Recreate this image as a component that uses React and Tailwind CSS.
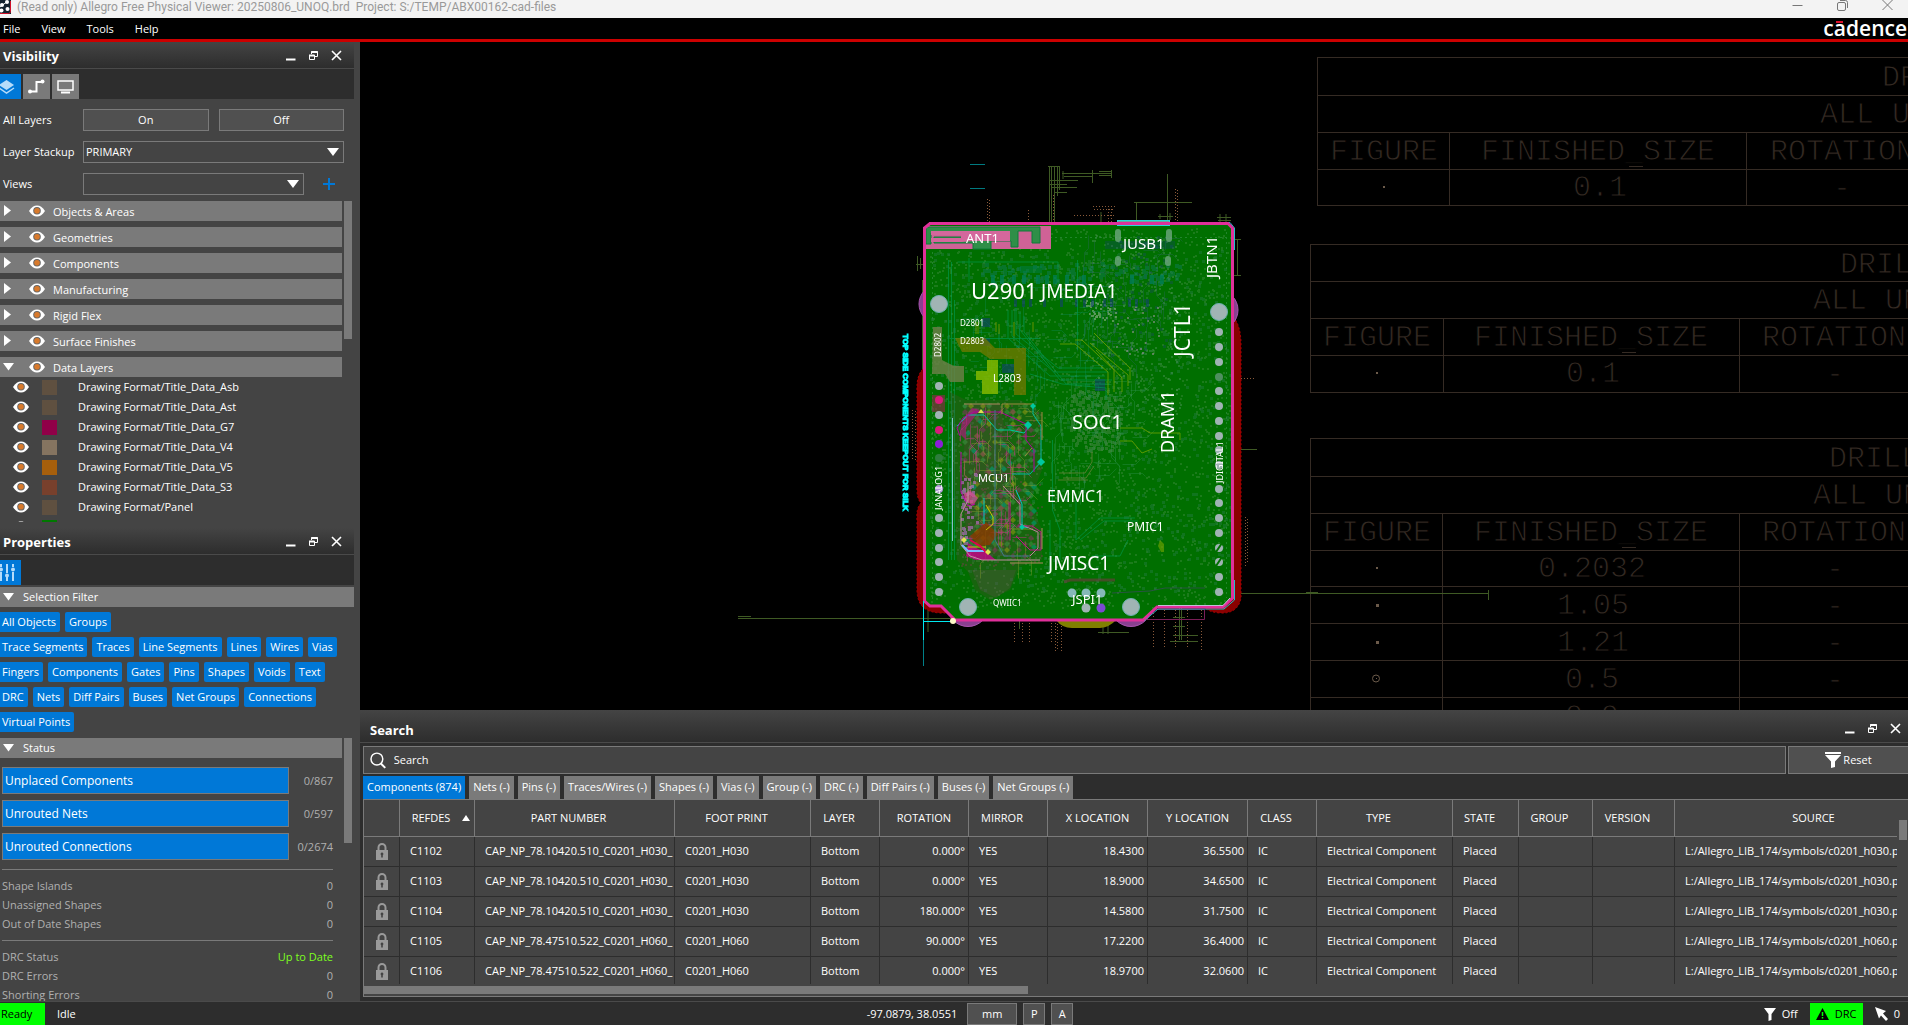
import React, { useState } from 'react';

const LAYER_GROUPS = ['Objects & Areas', 'Geometries', 'Components', 'Manufacturing', 'Rigid Flex', 'Surface Finishes', 'Data Layers'];

const DATA_LAYERS = [
  { name: 'Drawing Format/Title_Data_Asb', color: 'bg-[#5f5040]' },
  { name: 'Drawing Format/Title_Data_Ast', color: 'bg-[#5f5040]' },
  { name: 'Drawing Format/Title_Data_G7', color: 'bg-[#900048]' },
  { name: 'Drawing Format/Title_Data_V4', color: 'bg-[#857460]' },
  { name: 'Drawing Format/Title_Data_V5', color: 'bg-[#a65f0c]' },
  { name: 'Drawing Format/Title_Data_S3', color: 'bg-[#78402c]' },
  { name: 'Drawing Format/Panel', color: 'bg-[#5f5040]' },
  { name: '', color: 'bg-[#007800]' },
];

const FILTER_ROWS = [
  ['All Objects', 'Groups'],
  ['Trace Segments', 'Traces', 'Line Segments', 'Lines', 'Wires', 'Vias'],
  ['Fingers', 'Components', 'Gates', 'Pins', 'Shapes', 'Voids', 'Text'],
  ['DRC', 'Nets', 'Diff Pairs', 'Buses', 'Net Groups', 'Connections'],
  ['Virtual Points'],
];

const PROGRESS = [
  ['Unplaced Components', '0/867'],
  ['Unrouted Nets', '0/597'],
  ['Unrouted Connections', '0/2674'],
];

const SEARCH_TABS = ['Components (874)', 'Nets (-)', 'Pins (-)', 'Traces/Wires (-)', 'Shapes (-)', 'Vias (-)', 'Group (-)', 'DRC (-)', 'Diff Pairs (-)', 'Buses (-)', 'Net Groups (-)'];

const COLUMNS = [
  { key: 'lock', label: '', width: 'w-[36px]' },
  { key: 'refdes', label: 'REFDES', width: 'w-[75px]' },
  { key: 'part', label: 'PART NUMBER', width: 'w-[200px]' },
  { key: 'foot', label: 'FOOT PRINT', width: 'w-[136px]' },
  { key: 'layer', label: 'LAYER', width: 'w-[69px]' },
  { key: 'rotation', label: 'ROTATION', width: 'w-[89px]', right: true },
  { key: 'mirror', label: 'MIRROR', width: 'w-[79px]' },
  { key: 'x', label: 'X LOCATION', width: 'w-[100px]', right: true },
  { key: 'y', label: 'Y LOCATION', width: 'w-[100px]', right: true },
  { key: 'cls', label: 'CLASS', width: 'w-[69px]' },
  { key: 'type', label: 'TYPE', width: 'w-[136px]' },
  { key: 'state', label: 'STATE', width: 'w-[66px]' },
  { key: 'group', label: 'GROUP', width: 'w-[74px]' },
  { key: 'version', label: 'VERSION', width: 'w-[82px]' },
  { key: 'source', label: 'SOURCE', width: '' },
];

const makePart = (refdes, value, size, rotation, x, y) => ({
  refdes,
  part: `CAP_NP_78.${value}_C0201_${size}_`,
  foot: `C0201_${size}`,
  layer: 'Bottom',
  rotation,
  mirror: 'YES',
  x,
  y,
  cls: 'IC',
  type: 'Electrical Component',
  state: 'Placed',
  group: '',
  version: '',
  source: `L:/Allegro_LIB_174/symbols/c0201_${size.toLowerCase()}.psm`,
});

const PARTS = [
  makePart('C1102', '10420.510', 'H030', '0.000°', '18.4300', '36.5500'),
  makePart('C1103', '10420.510', 'H030', '0.000°', '18.9000', '34.6500'),
  makePart('C1104', '10420.510', 'H030', '180.000°', '14.5800', '31.7500'),
  makePart('C1105', '47510.522', 'H060', '90.000°', '17.2200', '36.4000'),
  makePart('C1106', '47510.522', 'H060', '0.000°', '18.9700', '32.0600'),
];

/* ---------- icons ---------- */

const Eye = () => (
  <svg width="16" height="12" viewBox="0 0 16 12" className="shrink-0">
    <path d="M0 6C2.5 2 5 .5 8 .5S13.500 2 16 6C13.500 10 11 11.500 8 11.500S2.500 10 0 6Z" fill="#fff" />
    <circle cx="8" cy="5.800" r="3.800" fill="#666" />
    <circle cx="8" cy="5.800" r="2.800" fill="#d87a2c" />
  </svg>
);

const Arrow = ({ open }) => (
  <svg width="12" height="12" viewBox="0 0 12 12" className="shrink-0">
    <path d={open ? 'M0 2H11L5.500 9.500Z' : 'M1 0V11L8 5.500Z'} fill="#fff" />
  </svg>
);

const Lock = () => (
  <svg width="12" height="17" viewBox="0 0 12 17" className="mx-auto">
    <path d="M2.500 8V4.500a3.500 3.500 0 0 1 7 0V8" fill="none" stroke="#9a9a9a" strokeWidth="2" />
    <rect x="0" y="7" width="12" height="10" fill="#9a9a9a" />
    <path d="M6 9.500a1.500 1.500 0 0 1 .8 2.700V14.500H5.200V12.200A1.500 1.500 0 0 1 6 9.500Z" fill="#444" />
  </svg>
);

const WindowButtons = () => (
  <div className="flex items-center gap-3">
    <button aria-label="Minimize">
      <svg width="11" height="11" viewBox="0 0 11 11"><path d="M1 9.500H10.500" stroke="#fff" strokeWidth="2" /></svg>
    </button>
    <button aria-label="Restore">
      <svg width="11" height="11" viewBox="0 0 11 11" fill="none" stroke="#fff">
        <path d="M3.500 4V1.500H9.500V6.500H7" />
        <path d="M3.500 2H9.500M1 5.500H6.500" strokeWidth="2" />
        <path d="M1.500 5V9.500H6.500V5" />
      </svg>
    </button>
    <button aria-label="Close">
      <svg width="11" height="11" viewBox="0 0 11 11"><path d="M1 1L10 10M10 1L1 10" stroke="#fff" strokeWidth="1.600" /></svg>
    </button>
  </div>
);

/* ---------- left side ---------- */

const PanelHeader = ({ title }) => (
  <div className="flex h-[27px] shrink-0 items-center justify-between border-b border-[#4a4a4a] bg-linear-to-b from-[#444444] to-[#2d2d2d] pr-3 pl-[3px]">
    <h2 className="pt-[1px] text-[13px] font-bold text-white">{title}</h2>
    <WindowButtons />
  </div>
);

const VisibilityPanel = () => {
  const [tab, setTab] = useState(0);
  const tabClass = (i) => `flex h-[25px] items-center justify-center ${tab === i ? 'bg-[#0078d7]' : 'bg-[#7a7a7a]'}`;

  return (
    <section className="flex min-h-0 flex-1 flex-col">
      <PanelHeader title="Visibility" />
      <div className="flex h-[30px] shrink-0 items-end gap-[2px] bg-[#2d2d2d]">
        <button aria-label="Layers" onClick={() => setTab(0)} className={`${tabClass(0)} w-[21px]`}>
          <svg width="21" height="16" viewBox="0 0 21 16">
            <path d="M-1 6L6.500 1L14 6L6.500 11Z" fill="#b5dcfa" />
            <path d="M-1 9L6.500 14L14 9" fill="none" stroke="#b5dcfa" strokeWidth="1.500" />
          </svg>
        </button>
        <button aria-label="Nets" onClick={() => setTab(1)} className={`${tabClass(1)} w-[27px]`}>
          <svg width="17" height="15" viewBox="0 0 17 15">
            <path d="M2 12.500H8.500V3H15" fill="none" stroke="#fff" strokeWidth="2" />
            <circle cx="2" cy="12.500" r="2" fill="#fff" />
            <circle cx="14.500" cy="2.500" r="2" fill="#fff" />
          </svg>
        </button>
        <button aria-label="Display" onClick={() => setTab(2)} className={`${tabClass(2)} w-[27px]`}>
          <svg width="17" height="14" viewBox="0 0 17 14">
            <rect x="1" y="1" width="15" height="9" fill="none" stroke="#fff" strokeWidth="1.500" />
            <path d="M4 12.500H13" stroke="#fff" strokeWidth="2" />
          </svg>
        </button>
      </div>

      <div className="grid shrink-0 grid-cols-[80px_1fr] items-center gap-y-[10px] py-[10px] pr-[10px] pb-[6px] pl-[3px] text-white">
        <span>All Layers</span>
        <div className="flex gap-[10px]">
          <button className="h-[22px] flex-1 border border-[#7a7a7a] bg-[#505050]">On</button>
          <button className="h-[22px] flex-1 border border-[#7a7a7a] bg-[#505050]">Off</button>
        </div>
        <label htmlFor="stackup">Layer Stackup</label>
        <div className="relative">
          <select id="stackup" className="h-[22px] w-full appearance-none border border-[#7a7a7a] bg-[#444444] px-[2px]">
            <option>PRIMARY</option>
          </select>
          <svg width="12" height="9" viewBox="0 0 12 9" className="pointer-events-none absolute top-[7px] right-[5px]"><path d="M0 0H12L6 8Z" fill="#fff" /></svg>
        </div>
        <label htmlFor="views">Views</label>
        <div className="flex items-center">
          <div className="relative flex-1">
            <select id="views" className="h-[22px] w-full appearance-none border border-[#7a7a7a] bg-[#444444] px-[2px]">
              <option aria-label="none"></option>
            </select>
            <svg width="12" height="9" viewBox="0 0 12 9" className="pointer-events-none absolute top-[7px] right-[5px]"><path d="M0 0H12L6 8Z" fill="#fff" /></svg>
          </div>
          <button aria-label="Add view" className="flex w-10 justify-center pl-[10px]">
            <svg width="12" height="12" viewBox="0 0 12 12"><path d="M6 0V12M0 6H12" stroke="#0078d7" strokeWidth="2" /></svg>
          </button>
        </div>
      </div>

      <div className="flex min-h-0 flex-1 gap-[2px] overflow-hidden pr-[2px] text-white">
        <div className="min-w-0 flex-1">
          <ul>
            {LAYER_GROUPS.map((name, i) => {
              const last = i === LAYER_GROUPS.length - 1;
              return (
                <li key={name}>
                  <button className={`flex h-5 w-full items-center bg-[#7a7a7a] pl-[3px] ${last ? '' : 'mb-[6px]'}`}>
                    <Arrow open={last} />
                    <span className="mr-2 ml-[14px]"><Eye /></span>
                    <span className="pt-[1px]">{name}</span>
                  </button>
                </li>
              );
            })}
          </ul>
          <ul>
            {DATA_LAYERS.map((layer, i) => (
              <li key={i} className="flex h-5 items-center pl-[13px]">
                <Eye />
                <span className={`mr-[21px] ml-[13px] h-[15px] w-[15px] ${layer.color}`}></span>
                {layer.name}
              </li>
            ))}
          </ul>
        </div>
        <div className="h-[138px] w-2 bg-[#7a7a7a]"></div>
      </div>
      <div className="h-[6px] shrink-0"></div>
    </section>
  );
};

const PropertiesPanel = () => {
  const [off, setOff] = useState([]);
  const toggle = (name) => setOff(off.includes(name) ? off.filter(n => n !== name) : [...off, name]);

  return (
    <section className="flex h-[473px] shrink-0 flex-col">
      <PanelHeader title="Properties" />
      <div className="flex h-[30px] shrink-0 items-end bg-[#2d2d2d]">
        <button aria-label="Filters" className="flex h-[25px] w-[21px] items-center bg-[#0078d7]">
          <svg width="16" height="17" viewBox="0 0 16 17" stroke="#b5dcfa" strokeWidth="2">
            <path d="M1 0V3M1 8V17M7 0V9M7 13V17M13 0V3M13 8V17" />
            <g stroke="none" fill="#b5dcfa">
              <circle cx="1" cy="5.500" r="2" />
              <circle cx="7" cy="11.500" r="2" />
              <circle cx="13" cy="5.500" r="2" />
            </g>
          </svg>
        </button>
      </div>
      <button className="mt-[2px] flex h-5 shrink-0 items-center gap-2 bg-[#7a7a7a] pl-[3px] text-white">
        <Arrow open /> Selection Filter
      </button>
      <div className="flex shrink-0 flex-col gap-[5px] py-[5px] text-white">
        {FILTER_ROWS.map((row) => (
          <div key={row[0]} className="flex gap-[5px]">
            {row.map((name, i) => (
              <button key={name} onClick={() => toggle(name)} className={`h-5 rounded-[2px] whitespace-nowrap ${i === 0 ? 'rounded-l-none pr-1 pl-[2px]' : 'px-1'} ${off.includes(name) ? 'bg-[#7a7a7a]' : 'bg-[#0078d7]'}`}>{name}</button>
            ))}
          </div>
        ))}
      </div>
      <div className="mt-[1px] flex min-h-0 flex-1 gap-[2px] overflow-hidden pr-[2px]">
        <div className="min-w-0 flex-1">
          <button className="flex h-5 w-full items-center gap-2 bg-[#7a7a7a] pl-[3px] text-white">
            <Arrow open /> Status
          </button>
          <div className="flex flex-col gap-[6px] pt-[9px] pr-[9px] pl-[2px] text-[#b0b0b0]">
            {PROGRESS.map(([name, count]) => (
              <div key={name} className="flex items-center justify-between">
                <button className="h-[27px] w-[287px] border border-[#7a7a7a] bg-[#0078d7] pl-[2px] text-left text-[12px] text-white">{name}</button>
                <span>{count}</span>
              </div>
            ))}
          </div>
          <dl className="mt-[9px] mr-[9px] ml-[2px] border-t border-[#7a7a7a] pt-[6px] leading-[19px] text-[#b0b0b0]">
            {['Shape Islands', 'Unassigned Shapes', 'Out of Date Shapes'].map((name) => (
              <div key={name} className="flex justify-between"><dt>{name}</dt><dd>0</dd></div>
            ))}
          </dl>
          <dl className="mt-[7px] mr-[9px] ml-[2px] border-t border-[#7a7a7a] pt-[6px] leading-[19px] text-[#b0b0b0]">
            <div className="flex justify-between"><dt>DRC Status</dt><dd className="text-[#7dff1e]">Up to Date</dd></div>
            <div className="flex justify-between"><dt>DRC Errors</dt><dd>0</dd></div>
            <div className="flex justify-between"><dt>Shorting Errors</dt><dd>0</dd></div>
          </dl>
        </div>
        <div className="h-[105px] w-2 bg-[#7a7a7a]"></div>
      </div>
    </section>
  );
};

/* ---------- board drawing ---------- */

// small seeded generator, so that the copper texture is the same on every load
const seeded = (seed) => () => {
  seed = (seed * 1664525 + 1013904223) % 4294967296;
  return seed / 4294967296;
};

const dots = (seed, count, x, y, w, h, size) => {
  const rnd = seeded(seed);
  let d = '';
  for (let i = 0; i < count; i++) {
    const px = Math.round(x + rnd() * w);
    const py = Math.round(y + rnd() * h);
    d += `M${px} ${py}h${size}v${size}h-${size}z`;
  }
  return d;
};

const diamonds = (seed, keep, x, y, w, h) => {
  const rnd = seeded(seed);
  let d = '';
  for (let py = y; py < y + h; py += 6) {
    for (let px = x + ((py - y) % 12 ? 6 : 0); px < x + w; px += 12) {
      if (rnd() < keep) d += `M${px} ${py - 3}l3 3l-3 3l-3 -3z`;
    }
  }
  return d;
};

const wires = (seed, count, x, y, w, h) => {
  const rnd = seeded(seed);
  let d = '';
  for (let i = 0; i < count; i++) {
    const a = Math.round(4 + rnd() * 16);
    const b = Math.round((rnd() - 0.5) * 16);
    d += `M${Math.round(x + rnd() * w) + 0.5} ${Math.round(y + rnd() * h) + 0.5}${rnd() > 0.5 ? `h${a}l${Math.abs(b)} ${b}` : `v${a}l${b} ${Math.abs(b)}v${a}`}`;
  }
  return d;
};

const OUTLINE = 'M930 223.500H1228L1232.500 228V598L1223 607H1157L1143 620H955L941 606H930L924.500 601V228Z';

const PADS_LEFT = [[386, '#a0b4b4'], [400, '#d81b7a'], [415, '#a0b4b4'], [430, '#d81b7a'], [444, '#8a1ed8'], [458, '#2d7d3c'], [489, '#b39ad8'], [518, '#a0b4b4'], [533, '#a0b4b4'], [548, '#a0b4b4'], [562, '#a0b4b4'], [577, '#a0b4b4'], [592, '#a0b4b4']];
const PADS_RIGHT = [332, 347, 362, 377, 391, 406, 421, 436, 450, 465, 489, 503, 518, 533, 548, 562, 577, 592];

const REFDES_LABELS = [
  ['ANT1', 966, 243, 13], ['JUSB1', 1123, 249, 15], ['U2901', 971, 299, 22], ['JMEDIA1', 1041, 298, 19],
  ['D2801', 960, 326, 8], ['D2803', 960, 344, 8], ['L2803', 993, 382, 10], ['SOC1', 1072, 429, 20],
  ['MCU1', 978, 482, 11], ['EMMC1', 1047, 502, 16], ['PMIC1', 1127, 531, 12], ['JMISC1', 1048, 570, 19],
  ['JSPI1', 1072, 604, 13], ['QWIIC1', 993, 606, 8],
];

const VERTICAL_LABELS = [
  ['JBTN1', 1217, 278, 15], ['JCTL1', 1190, 357, 21], ['DRAM1', 1174, 453, 18],
  ['D2802', 941, 357, 8], ['JANALOG1', 942, 510, 9], ['JDIGITAL1', 1223, 483, 9],
];

const DRILL_TABLES = [
  { left: 1317, cols: [1449, 1746], lines: [57, 95, 132, 169, 205], end: 205, title: ['DRILL', 1882], units: 1820, head: [1330, 1481, 1770], rows: [['0.1', 1573]], dash: 1833 },
  { left: 1310, cols: [1443, 1739], lines: [244, 281, 318, 355, 392], end: 392, title: ['DRILL', 1840], units: 1813, head: [1323, 1474, 1762], rows: [['0.1', 1566]], dash: 1826 },
  { left: 1310, cols: [1442, 1739], lines: [438, 476, 513, 550, 586, 623, 660, 697], end: 740, title: ['DRILL', 1829], units: 1813, head: [1323, 1474, 1762], rows: [['0.2032', 1538], ['1.05', 1557], ['1.21', 1557], ['0.5', 1565], ['0.9', 1565]], dash: 1826 },
];

const DrillTable = ({ t }) => (
  <g>
    <g stroke="#352b24" fill="none">
      {t.lines.map((y) => <path key={y} d={`M${t.left} ${y + 0.5}H2400`} />)}
      <path d={`M${t.left + 0.5} ${t.lines[0]}V${t.end}`} />
      {t.cols.map((x) => <path key={x} d={`M${x + 0.5} ${t.lines[2]}V${t.end}`} />)}
      <path d={`M${t.head[1] + 148} ${t.lines[2] + 34.5}h14`} />
    </g>
    <g fill="#342a23" stroke="#000" strokeWidth="1" fontFamily="Liberation Mono, monospace" fontSize="30">
      <text x={t.title[1]} y={t.lines[0] + 29}>{t.title[0]}</text>
      <text x={t.units} y={t.lines[1] + 28}>ALL UNITS</text>
      <text x={t.head[0]} y={t.lines[2] + 28}>FIGURE</text>
      <text x={t.head[1]} y={t.lines[2] + 28}>FINISHED_SIZE</text>
      <text x={t.head[2]} y={t.lines[2] + 28}>ROTATION</text>
      {t.rows.map(([size, x], i) => (
        <React.Fragment key={size}>
          <text x={x} y={t.lines[3] + 27 + i * 37}>{size}</text>
          <text x={t.dash} y={t.lines[3] + 28 + i * 37}>-</text>
        </React.Fragment>
      ))}
    </g>
    <g fill="#6b5a4a">
      {t.rows.slice(0, 3).map(([size], i) => <rect key={size} x={t.left + 66} y={t.lines[3] + 17 + i * 37} width={i ? 3 : 2} height={i ? 3 : 2} />)}
      {t.rows.length > 3 && <circle cx="1376" cy="678.500" r="3.500" fill="none" stroke="#6b5a4a" />}
      {t.rows.length > 3 && <rect x="1376" y="678" width="1" height="1" />}
    </g>
  </g>
);

const BoardCanvas = () => (
  <svg viewBox="360 42 1548 668" preserveAspectRatio="xMinYMin slice" className="h-full w-full" fontFamily="Noto Sans, Open Sans, sans-serif">
    <defs>
      <clipPath id="board"><path d={OUTLINE} /></clipPath>
    </defs>
    {DRILL_TABLES.map((t) => <DrillTable key={t.lines[0]} t={t} />)}

    {/* dimension lines */}
    <g stroke="#3f5a24" fill="none">
      <path d="M738 618.500H1143M1240 593.500H1489M1488.500 590V600M738 616.500H751M1306 592.500H1318" />
      <path d="M1049.500 166V222M1051.500 166V222M1054.500 166V222M1057.500 166V196M1059.500 166V190" />
      <path d="M1048 166.500H1060M1049 180.500H1078M1050 184.500H1067M1052 187.500H1077M1055 192.500H1067M1062 173.500H1112M1064 176.500H1092M1092.500 170V183M1063 171V179M1099 171.500H1112M1099 175.500H1112M1111.500 170V178" />
      <path d="M1167.500 174V220M1134 202.500H1192M1136.500 202V221M1158 216.500H1173M1160 214V219M1170 213V220M1101 212V222" />
      <path d="M1217 217.500H1231M1220 214V222M1226 214V222M1218 220.500H1231M1237.500 239V276M1234 239.500H1241M1234 275.500H1241" />
      <path d="M916 264.500H924M917.500 256V271M920.500 258V269M922.500 280V370M1234 449.500H1257" />
      <path d="M1179.500 607V640M1181.500 607V640M1173 617.500H1185M1173 635.500H1198M1170 641.500H1198M1173 626.500H1185M1098 632.500H1129M1103 624V634M1108 624V634M1019.500 620V629M928 607V632" />
    </g>
    <g stroke="#8a5a3a" strokeDasharray="1 2" fill="none">
      <path d="M987.500 199V222M989.500 200V222M1028.500 210V222M1053.500 195V222M1175.500 189V222M1177.500 190V222M1074 215.500H1115M1093 206.500H1115M1094 209.500H1115M1108.500 206V222M1111.500 206V222" />
      <path d="M1235 378.500H1255M912.500 410V460M915.500 411V460M1245.500 517V566M1247.500 519V564" />
      <path d="M1014.500 623V642M1022.500 623V642M1029.500 623V642M1051.500 623V642M1055.500 623V651M1057.500 624V651M1061.500 623V651M1153.500 610V649M1164.500 610V649M1175.500 610V649M1187.500 610V649M1201.500 610V652" />
    </g>
    <path d="M970 164.500H985M970 188.500H985" stroke="#007a80" />

    {/* keep-outs behind the board */}
    <path d="M926 367Q916 372 917 392V490Q917 499 921 503Q916 508 917 520V590Q917 612 940 613H950V367Z" fill="#8a0000" stroke="#b00000" strokeDasharray="2 2" />
    <path d="M1233 317Q1241 325 1241 345V598Q1238 614 1220 613Q1208 612 1204 607Z" fill="#8a0000" stroke="#b00000" strokeDasharray="2 2" />
    <g fill="#8a3f90" stroke="#a855b0">
      <circle cx="938" cy="304" r="19" />
      <circle cx="1218" cy="310" r="20" />
      <circle cx="968" cy="606" r="20.500" />
      <circle cx="1131" cy="606" r="20.500" />
    </g>
    <path d="M1056 620Q1062 628 1072 628H1100Q1110 627 1116 620Z" fill="#808000" />
    <path d="M1145 609.500H1204.500V619.500H1143" fill="none" stroke="#7a1e58" />

    <g clipPath="url(#board)">
      <path d={OUTLINE} fill="#007000" />
      {/* copper texture */}
      <path d={dots(3, 2400, 930, 228, 300, 380, 2)} fill="#3f8f3f" opacity=".45" />
      <path d={dots(8, 900, 930, 250, 300, 340, 3)} fill="#1f7a38" opacity=".55" />
      <path d={dots(11, 300, 1090, 235, 90, 180, 2)} fill="#5a9a6a" opacity=".4" />
      <path d={dots(14, 70, 1105, 235, 70, 120, 3)} fill="#204a70" opacity=".35" />
      <path d={dots(15, 90, 980, 262, 200, 20, 4)} fill="#107a55" opacity=".5" />
      <path d={dots(21, 220, 1070, 390, 50, 60, 3)} fill="#4a8a4a" opacity=".5" />
      <path d={dots(27, 50, 1085, 300, 30, 20, 2)} fill="#8fb08a" opacity=".6" />
      <path d={dots(29, 24, 1115, 305, 45, 50, 2)} fill="#b09ab0" opacity=".5" />
      <path d={wires(31, 45, 1080, 230, 85, 120)} stroke="#2a6a5a" fill="none" opacity=".4" />
      <path d={wires(35, 50, 960, 260, 140, 120)} stroke="#0f8a55" fill="none" opacity=".4" />
      <path d={wires(39, 50, 1050, 380, 90, 100)} stroke="#2f9050" fill="none" opacity=".4" />
      <path d="M930 237.500H1230M932.500 232V600M1226.500 232V598" stroke="#2f8f3f" strokeDasharray="2 3" opacity=".7" />
      <g fill="#143f78" opacity=".55">
        {[1014, 1022, 1029, 1043, 1060, 1075, 1083, 1091, 1103, 1110, 1128, 1135, 1146].map((x) => <rect key={x} x={x} y="299" width="3" height="8" />)}
        <rect x="982" y="318" width="8" height="9" /><rect x="980" y="338" width="10" height="8" /><rect x="1002" y="364" width="12" height="9" />
        <rect x="1095" y="379" width="10" height="12" /><rect x="1105" y="241" width="70" height="8" opacity=".5" />
      </g>
      <g fill="#00805a" opacity=".7">
        {[991, 1000, 1012, 1022, 1036, 1045, 1053, 1065, 1082, 1130, 1150, 1160].map((x) => <rect key={x} x={x} y="275" width="4" height="9" />)}
        <rect x="1020" y="266" width="22" height="7" opacity=".6" />
      </g>
      {/* bus runs */}
      <g fill="none" stroke="#00a060" opacity=".55">
        <path d="M1008 310V338L1050 376H1105M1012 310V336L1054 372H1108M1016 308V334L1058 368H1104M1020 312V330L1060 380H1112M1024 316V332L1066 384H1110M1030 374L1062 384L1106 388V400" />
        <path d="M950 338.500H1040M948.500 260V560M951.500 262V560M954.500 300V560M957.500 262H1058V300M969 258V282M1077.500 260V350" />
        <path d="M1052.500 440V510L1060 530V560M1076 500V540L1100 518H1135M1080 540L1104 521H1138M1050 520V570M1092 556H1120L1128 540" />
      </g>
      <g fill="none" stroke="#7aa800" opacity=".75">
        <path d="M1060 344H1075L1108 372V395M1075 340H1082L1114 370V392M1094 333L1106 345L1130 368V380M1090 343L1128 375V386M1096 350L1122 378V392" />
        <path d="M1120 428H1142L1150 433H1180V440M1120 441H1132L1142 453L1152 449" />
        <path d="M976 322V334M978 322V334M996 322V332M999 324V334M1014 322V336M1033 322V332" stroke="#88a000" />
      </g>
      <path d="M1059 473H1085L1092 462V452M1063 478H1086L1094 466M1058 480H1088" stroke="#8a8a4a" fill="none" opacity=".6" />
      <path d="M1064 582L1070 580H1115" stroke="#703840" fill="none" opacity=".6" strokeWidth="3" />
      <path d="M1112 593L1150 591L1165 588H1205" stroke="#3a4a60" fill="none" opacity=".7" />
      <path d="M1160 540l4 4v8h-3l-3-6z" fill="#7aa800" opacity=".6" />

      {/* antenna */}
      <rect x="926" y="226" width="125" height="23" fill="#cf6296" />
      <path d="M926 227H1040V243H1032V231H1018V247H1011V241H991V249H973V243H934V237H962V233H931V244H926Z" fill="#2f8f48" stroke="#0f7a3a" />
      <path d="M931 231H1010V241H991L973 241L962 242H931V238H961V235H931Z" fill="#d4679c" />

      {/* power shapes */}
      <path d="M955 338H985L995 348H1026V395H1014V359H990L980 352H962Z" fill="#7a7a00" opacity=".7" />
      <path d="M987 360H998V394H982V380H976V371H987Z" fill="#82b800" opacity=".85" />
      <path d="M933 327H942V360L954 366H964V382H950L945 374H932Z" fill="#6f7f4a" opacity=".8" />
      <path d="M932 395H945V412H932Z" fill="#8f2a4a" opacity=".6" />

      {/* controller fan-out */}
      <path d="M950 392L966 400H1020L1042 412V470L1030 500L1042 530V560L1020 566L1010 590L990 600L975 590L968 572L957 560Z" fill="#5a4636" opacity=".25" />
      <path d="M966 404H1000L1010 460V556H970L962 500Z" fill="#7a3050" opacity=".22" />
      <path d="M972 570H1016L1010 588L996 598L980 590Z" fill="#80486a" opacity=".2" />
      <path d={diamonds(5, 0.4, 965, 406, 78, 155)} fill="#3f9a46" opacity=".5" />
      <path d={diamonds(9, 0.25, 971, 406, 60, 150)} fill="#8a9a14" opacity=".6" />
      <path d={diamonds(13, 0.25, 965, 412, 70, 148)} fill="#7a3a5a" opacity=".6" />
      <path d={diamonds(17, 0.15, 968, 409, 72, 150)} fill="#00a078" opacity=".6" />
      <path d={dots(41, 220, 958, 405, 84, 160, 2)} fill="#8a3a5a" opacity=".35" />
      <path d={wires(43, 40, 962, 405, 60, 140)} stroke="#b83a80" fill="none" opacity=".5" />
      <path d={wires(47, 40, 962, 405, 70, 140)} stroke="#8aa030" fill="none" opacity=".4" />
      <path d={dots(53, 50, 960, 470, 16, 90, 3)} fill="#c070d0" opacity=".6" />
      <path d="M982 526L986 522L998 534L990 545L980 546L970 536Z" fill="#8a3a00" opacity=".8" />
      <path d="M968 543L976 548L986 552L996 560H976L966 556Z" fill="#c8008a" opacity=".8" />
      <path d="M962 420L972 408L980 410L966 428V440L960 434Z" fill="#c0108a" opacity=".6" />
      <path d="M964 494l6-4l8 8l-5 8l-8-6z" fill="#d84a90" opacity=".7" />
      <g fill="none" strokeWidth="1">
        <path d="M957 426L968 415H984L997 430H1010L1024 433L1030 426" stroke="#00c8a0" />
        <path d="M1033 406V414L1041 426V462L1030 474H1012" stroke="#00b8a0" />
        <path d="M984 498V524M1016 490L1022 504V526L1028 528" stroke="#00c8c8" />
        <path d="M960 436L957 428L963 418L974 412H1000L1026 424V440L1034 450V472" stroke="#b000a0" />
        <path d="M961 452V492L968 506L975 504" stroke="#c000b0" />
        <path d="M968 482V500L961 514V545L970 556L982 560H1040" stroke="#c090a0" />
        <path d="M1003 486L1020 504V524L1038 532V548L1030 556" stroke="#c080a0" />
        <path d="M1010 502V540M1016 536L1030 550H1041V532L1032 526H1018" stroke="#c0108a" />
        <path d="M1042 412V440M1032 448L1025 456M1002 414V404H1034" stroke="#a08a40" />
        <path d="M986 505L993 517V524L986 530M968 547H986" stroke="#c8c800" />
        <path d="M1042 528V549M964 404H1000M1010 563H1043" stroke="#b08a60" />
        <path d="M995 410V540L1004 556H1030" stroke="#407a8a" />
      </g>
      <path d="M952.500 418V541" stroke="#8ac0c8" strokeWidth="1" />
      <path d="M962 545L968 551H984" stroke="#7ab8ff" strokeWidth="2" fill="none" />
      <path d="M970 540L980 546L988 554" stroke="#e00050" strokeWidth="2" fill="none" />
      <g fill="#e0e050"><path d="M964 537l3 3l-3 3l-3-3zM988 549l3 3l-3 3l-3-3zM981 409l3 4h-6z" /></g>
      <g fill="#00c8a0"><path d="M1028 421l4 4l-4 4l-4-4zM1041 458l4 4l-4 4l-4-4zM1022 524l3 3l-3 3l-3-3zM1033 403l3 3l-3 3l-3-3z" /></g>
    </g>

    {/* USB connector */}
    <rect x="1117.500" y="220.500" width="52" height="5" fill="#6fa0a0" stroke="#2ad8d8" />
    <g fill="#6fa87f" opacity=".8"><rect x="1115" y="229" width="6" height="13" rx="3" /><rect x="1166" y="229" width="6" height="13" rx="3" /><rect x="1115" y="256" width="6" height="10" rx="3" /><rect x="1165" y="256" width="6" height="10" rx="3" /></g>

    {/* outline */}
    <path d="M929 222.500H1050M1200 222.500H1230L1234.500 228V250M1234.500 580V600L1224 609H1158L1144 621" fill="none" stroke="#20c0c8" />
    <path d={OUTLINE} fill="none" stroke="#e0309a" strokeWidth="3" />
    <path d="M1158 605.500H1223L1230 598" fill="none" stroke="#c0c0d8" />
    <path d="M923.500 601V640M924 621.500H955" stroke="#00e8f0" fill="none" />
    <path d="M923.500 640V666" stroke="#008088" />
    <circle cx="953" cy="621" r="3" fill="#fff8c8" />

    {/* holes and pads */}
    <g fill="#a0b4b4" stroke="#6fb0b0">
      <circle cx="939" cy="304" r="8.500" />
      <circle cx="1219" cy="312" r="8.500" />
      <circle cx="968" cy="607" r="8.500" />
      <circle cx="1131" cy="607" r="8.500" />
    </g>
    {PADS_LEFT.map(([y, fill]) => <circle key={y} cx="939" cy={y} r="4" fill={fill} />)}
    {PADS_RIGHT.map((y) => <circle key={y} cx="1219" cy={y} r="4" fill={y === 377 ? '#4f8f5f' : '#a0b4b4'} />)}
    <path d="M1216 552L1222 543M1216 566L1222 557" stroke="#007000" strokeWidth="2" />
    {[1072, 1086, 1101].map((x) => <circle key={x} cx={x} cy="593" r="4.500" fill="#86b8b8" />)}
    <circle cx="1086" cy="608" r="4.500" fill="#a0b4b4" />
    <circle cx="1101" cy="608" r="4.500" fill="#7a4ad0" />

    <g fill="#fff">
      {REFDES_LABELS.map(([name, x, y, size]) => <text key={name} x={x} y={y} fontSize={size}>{name}</text>)}
      {VERTICAL_LABELS.map(([name, x, y, size]) => <text key={name} fontSize={size} transform={`translate(${x} ${y}) rotate(-90)`}>{name}</text>)}
    </g>
    <text fontSize="8" fontWeight="bold" fill="#00ffff" stroke="#00ffff" fontFamily="Liberation Sans, sans-serif" transform="translate(903 334) rotate(90)">TOP SIDE COMPONENTS KEEPOUT FOR SILK</text>
  </svg>
);

/* ---------- search ---------- */

const SearchPanel = () => {
  const [tab, setTab] = useState(0);
  const [query, setQuery] = useState('');

  return (
    <section className="shrink-0 bg-[#2d2d2d] pb-1 text-white">
      <div className="flex h-[33px] items-end justify-between border-b border-[#4a4a4a] bg-linear-to-b from-[#444444] to-[#2d2d2d] pr-[7px] pb-1 pl-[10px]">
        <h2 className="text-[13px] font-bold">Search</h2>
        <div className="pb-1"><WindowButtons /></div>
      </div>
      <div className="flex gap-[2px] pt-[3px] pl-[3px]">
        <label className="flex h-7 flex-1 items-center gap-2 border border-[#7a7a7a] bg-[#444444] pl-[6px]">
          <svg width="16" height="17" viewBox="0 0 16 17" fill="none" stroke="#fff">
            <circle cx="7" cy="7" r="6" strokeWidth="1.500" />
            <path d="M11 11.500L15.500 16" strokeWidth="2" />
          </svg>
          <input aria-label="Search" value={query} onChange={e => setQuery(e.target.value)} placeholder="Search" className="w-full bg-transparent placeholder:text-white focus:outline-none" />
        </label>
        <button onClick={() => setQuery('')} className="flex h-7 w-[120px] items-center justify-center gap-[2px] border border-r-0 border-[#7a7a7a] bg-[#505050]">
          <svg width="16" height="16" viewBox="0 0 16 16" fill="#fff"><path d="M0 0H16V2H0ZM0 3H16L10 9.500V15L6 16V9.500Z" /></svg>
          Reset
        </button>
      </div>
      <div className="flex gap-1 pt-[2px] pl-[3px]">
        {SEARCH_TABS.map((name, i) => (
          <button key={name} onClick={() => setTab(i)} className={`h-[23px] px-1 pb-[1px] whitespace-nowrap ${tab === i ? 'bg-[#0078d7]' : 'bg-[#7a7a7a]'}`}>{name}</button>
        ))}
      </div>
      <div className="ml-[3px] border-y border-l border-[#7a7a7a] bg-[#444444]">
        <div className="flex gap-[2px] pr-[1px]">
          <div className="h-[184px] min-w-0 flex-1 overflow-hidden">
            <table className="w-[1600px] min-w-full table-fixed border-separate border-spacing-0">
              <thead>
                <tr>
                  {COLUMNS.map((col, i) => (
                    <th key={col.key} className={`relative h-[37px] border-b border-[#7a7a7a] font-normal ${col.right ? 'pr-0' : 'pr-3'} ${col.width} ${i < COLUMNS.length - 1 ? 'border-r' : ''}`}>
                      {col.label}
                      {col.key === 'refdes' && (
                        <svg width="8" height="6" viewBox="0 0 8 6" className="absolute top-[15px] right-1"><path d="M4 0L8 6H0Z" fill="#fff" /></svg>
                      )}
                    </th>
                  ))}
                </tr>
              </thead>
              <tbody>
                {PARTS.map((part) => (
                  <tr key={part.refdes}>
                    {COLUMNS.map((col, i) => (
                      <td key={col.key} className={`h-[30px] overflow-hidden border-b border-[#2d2d2d] pb-[1px] whitespace-nowrap ${i < COLUMNS.length - 1 ? 'border-r' : ''} ${col.right ? 'pr-[3px] text-right' : col.key === 'lock' ? '' : 'pl-[10px]'}`}>
                        {col.key === 'lock' ? <Lock /> : part[col.key]}
                      </td>
                    ))}
                  </tr>
                ))}
              </tbody>
            </table>
          </div>
          <div className="mt-5 h-5 w-2 bg-[#7a7a7a]"></div>
        </div>
        <div className="pt-[2px] pb-[2px]"><div className="h-2 w-[43%] bg-[#7a7a7a]"></div></div>
      </div>
    </section>
  );
};

/* ---------- bars ---------- */

const TitleBar = () => (
  <header className="flex h-[18px] shrink-0 items-start justify-between bg-[#f3f3f3] pr-[15px] text-[#999999]">
    <div className="flex items-start gap-[6px]">
      <svg width="11" height="14" viewBox="0 0 11 14">
        <rect width="11" height="14" fill="#14222e" />
        <path d="M10.500 1V11.500Q10.500 13.500 8.500 13.500H0" fill="none" stroke="#d01028" />
        <path d="M0 7L8 1" stroke="#fff" />
        <g fill="#fff"><circle cx="7" cy="2" r="2" /><circle cx="2" cy="5" r="2" /><circle cx="7.500" cy="9" r="2" /><circle cx="1.500" cy="10.500" r="2" /></g>
      </svg>
      <h1 className="font-['Roboto','Open_Sans',sans-serif] text-[12px] leading-[14px] whitespace-pre">(Read only) Allegro Free Physical Viewer: 20250806_UNOQ.brd  Project: S:/TEMP/ABX00162-cad-files</h1>
    </div>
    <div className="flex gap-[34px]">
      <button aria-label="Minimize window"><svg width="11" height="11" viewBox="0 0 11 11"><path d="M.5 5.500H10.500" stroke="#777" /></svg></button>
      <button aria-label="Restore window">
        <svg width="11" height="11" viewBox="0 0 11 11" fill="none" stroke="#777"><rect x=".5" y="2.500" width="8" height="8" rx="1.500" /><path d="M3 .5H8.500Q10.500 .5 10.500 2.500V8" /></svg>
      </button>
      <button aria-label="Close window"><svg width="11" height="11" viewBox="0 0 11 11"><path d="M.5 0L10.500 10M10.500 0L.5 10" stroke="#777" /></svg></button>
    </div>
  </header>
);

const MenuBar = () => (
  <nav className="flex h-6 shrink-0 items-center justify-between border-b-[3px] border-[#cc0000] bg-black pl-[3px] text-white">
    <div className="flex gap-[21px]">
      {['File', 'View', 'Tools', 'Help'].map((name) => <button key={name}>{name}</button>)}
    </div>
    <div className="pr-[1px] text-[21px] leading-[21px] font-semibold">
      c<span className="relative">a<span className="absolute top-[7px] left-[2px] h-[2px] w-[7px] bg-[#e0102c]"></span></span>dence
    </div>
  </nav>
);

const StatusBar = () => (
  <footer className="grid h-6 shrink-0 grid-cols-[1fr_auto_1fr] border-t border-[#4a4a4a] bg-[#2d2d2d] pt-[1px] text-white">
    <div className="flex items-center gap-3">
      <span className="flex h-full w-[45px] items-center bg-[#00ff00] pl-[1px] text-black">Ready</span>
      <span>Idle</span>
    </div>
    <div className="flex items-center gap-[6px] pl-8">
      <span className="mr-[4px]">-97.0879, 38.0551</span>
      <button className="h-[22px] w-[50px] border border-[#7a7a7a] bg-[#505050]">mm</button>
      <button className="h-[22px] w-[22px] border border-[#7a7a7a] bg-[#505050]">P</button>
      <button className="h-[22px] w-[22px] border border-[#7a7a7a] bg-[#505050]">A</button>
    </div>
    <div className="flex items-center justify-end gap-3 pr-2">
      <button className="flex items-center gap-[6px]">
        <svg width="12" height="13" viewBox="0 0 12 13" fill="#fff"><path d="M0 0H12L7.500 6V12L4.500 13V6Z" /></svg>
        Off
      </button>
      <button className="flex h-full w-[53px] items-center justify-center gap-[6px] bg-[#00ff00] text-black">
        <svg width="13" height="12" viewBox="0 0 13 12"><path d="M6.500 0L13 12H0Z" /><path d="M6.500 4V8M6.500 9V10.500" stroke="#00ff00" strokeWidth="1.500" /></svg>
        DRC
      </button>
      <button className="flex items-center gap-[6px]">
        <svg width="13" height="14" viewBox="0 0 13 14" fill="#fff"><path d="M0 0L11 4L8 6.500L13 12L11 14L6 8.500L4 11.500Z" /></svg>
        0
      </button>
    </div>
  </footer>
);

export default function App() {
  return (
    <div className="flex h-screen flex-col overflow-hidden bg-[#2d2d2d] font-['Open_Sans','Noto_Sans',sans-serif] text-[11px] leading-[16px]">
      <TitleBar />
      <MenuBar />
      <div className="flex min-h-0 flex-1">
        <aside className="flex w-[360px] shrink-0 flex-col bg-[#444444] pr-[6px]">
          <VisibilityPanel />
          <PropertiesPanel />
        </aside>
        <main className="flex min-w-0 flex-1 flex-col">
          <div className="min-h-0 flex-1 bg-black">
            <BoardCanvas />
          </div>
          <SearchPanel />
        </main>
      </div>
      <StatusBar />
    </div>
  );
}
